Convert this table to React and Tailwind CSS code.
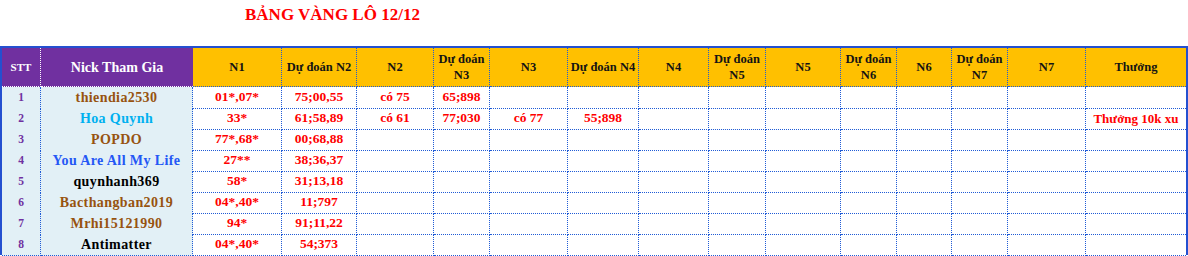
import React from 'react'

const cols = 'grid-cols-[39px_152px_89px_75px_77px_56px_78px_71px_70px_57px_75px_56px_55px_56px_78px_100px]'

const heads = [
  ['N1'], ['Dự đoán N2'], ['N2'], ['Dự đoán', 'N3'], ['N3'], ['Dự đoán N4'], ['N4'],
  ['Dự đoán', 'N5'], ['N5'], ['Dự đoán', 'N6'], ['N6'], ['Dự đoán', 'N7'], ['N7'], ['Thưởng'],
]

const brown = 'text-[#97530f]'

const rows = [
  { nick: 'thiendia2530', color: brown, vals: ['01*,07*', '75;00,55', 'có 75', '65;898'] },
  { nick: 'Hoa Quynh', color: 'text-[#00b0f0]', vals: ['33*', '61;58,89', 'có 61', '77;030', 'có 77', '55;898'], prize: 'Thưởng 10k xu' },
  { nick: 'POPDO', color: brown, vals: ['77*,68*', '00;68,88'] },
  { nick: 'You Are All My Life', color: 'text-[#2457f5]', vals: ['27**', '38;36,37'] },
  { nick: 'quynhanh369', color: 'text-black', vals: ['58*', '31;13,18'] },
  { nick: 'Bacthangban2019', color: brown, vals: ['04*,40*', '11;797'] },
  { nick: 'Mrhi15121990', color: brown, vals: ['94*', '91;11,22'] },
  { nick: 'Antimatter', color: 'text-black', vals: ['04*,40*', '54;373'] },
]

const cell = 'border-r border-b border-dotted border-[#1f5bd6] flex items-center justify-center'

export default function App() {
  return (
    <div className="w-[1188px] h-[256px] bg-white overflow-hidden font-['Liberation_Serif','Times_New_Roman',serif]">
      <div className="h-[46px] pl-[245px] pt-[4px]">
        <h1 className="text-[17px] font-bold text-[#ff0000] leading-[21px]">BẢNG VÀNG LÔ 12/12</h1>
      </div>

      <div className="border-l-2 border-t-2 border-r-2 border-[#2450d0]">
        {/* header */}
        <div className={`grid ${cols} h-[39px]`}>
          <div className="bg-[#7030a0] border-r border-b border-dotted border-white flex items-center justify-center text-white text-[11px] font-bold">STT</div>
          <div className="bg-[#7030a0] border-b border-dotted border-white flex items-center justify-center text-white text-[14px] font-bold">Nick Tham Gia</div>
          {heads.map((h, i) => (
            <div
              key={i}
              className={`bg-[#ffc000] ${i === heads.length - 1 ? 'border-b' : 'border-r border-b'} border-dotted border-[#1f5bd6] flex flex-col items-center justify-center text-[12.5px] font-bold text-[#141414] leading-[16px]`}
            >
              {h.map((t) => <span key={t}>{t}</span>)}
            </div>
          ))}
        </div>

        {/* body */}
        {rows.map((r, idx) => (
          <div key={idx} className={`grid ${cols} h-[21px]`}>
            <div className={`${cell} bg-[#e2f0f6] text-[11.5px] font-bold text-[#7030a0]`}>{idx + 1}</div>
            <div className={`${cell} bg-[#e2f0f6] text-[14px] font-bold tracking-[0.4px] ${r.color}`}>{r.nick}</div>
            {Array.from({ length: 13 }).map((_, i) => (
              <div key={i} className={`${cell} text-[13.5px] font-bold text-[#ff0000]`}>{r.vals[i] || ''}</div>
            ))}
            <div className="border-b border-dotted border-[#1f5bd6] flex items-center justify-center text-[13px] font-bold text-[#ff0000]">{r.prize || ''}</div>
          </div>
        ))}
      </div>
    </div>
  )
}
